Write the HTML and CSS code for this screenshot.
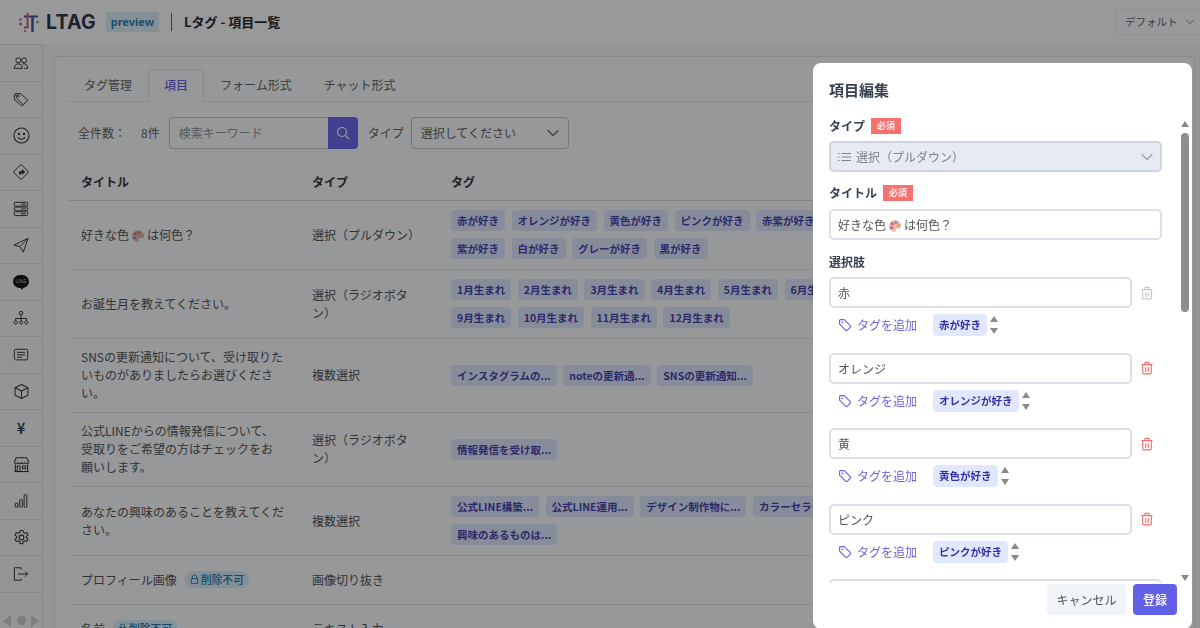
FILE: index.html
```html
<!DOCTYPE html>
<html lang="ja">
<head>
  <meta charset="UTF-8">
  <title>Lタグ - 項目一覧</title>
  <link rel="stylesheet" href="styles.css">
</head>
<body>
  <svg class="defs" width="0" height="0">
    <defs>
      <symbol id="palette" viewBox="0 0 16 16">
        <path d="M8 1.500C3.800 1.500 1 4.400 1 8s2.900 6.500 6.500 6.500c1.500 0 1.600-1 1.200-1.900-.4-1 .2-1.800 1.300-1.800h2c1.700 0 3-1 3-2.800 0-3.700-3.200-6.500-7-6.500z" fill="#e8b4a4"/>
        <circle cx="5" cy="5.500" r="1.500" fill="#d9505f"/>
        <circle cx="9" cy="4" r="1.500" fill="#6a7fd0"/>
        <circle cx="12" cy="7" r="1.400" fill="#e3a13c"/>
        <circle cx="4" cy="10" r="1.500" fill="#8a5fc0"/>
      </symbol>
      <symbol id="tag" viewBox="0 0 16 16">
        <path d="M1.800 2.800a1 1 0 0 1 1-1h4.300l7 7a1.200 1.200 0 0 1 0 1.700l-3.600 3.600a1.200 1.200 0 0 1-1.700 0l-7-7z" fill="none" stroke="currentColor" stroke-width="1.300" stroke-linejoin="round"/>
        <circle cx="5" cy="5" r="1" fill="currentColor"/>
      </symbol>
      <symbol id="trash" viewBox="0 0 14 16">
        <path d="M1 4h12M4.500 4V2.500a1 1 0 0 1 1-1h3a1 1 0 0 1 1 1V4M2 4v9.500a1.300 1.300 0 0 0 1.300 1.300h7.400a1.300 1.300 0 0 0 1.300-1.300V4M5.500 7.500v4.500M8.500 7.500v4.500" fill="none" stroke="currentColor" stroke-width="1.300" stroke-linecap="round"/>
      </symbol>
      <symbol id="chevron" viewBox="0 0 12 8">
        <path d="M1 1.500l5 5 5-5" fill="none" stroke="currentColor" stroke-width="1.200" stroke-linecap="round" stroke-linejoin="round"/>
      </symbol>
      <symbol id="lock" viewBox="0 0 10 12">
        <path d="M2.500 5V3.500a2.500 2.500 0 0 1 5 0V5M1.500 5h7v5.500h-7z" fill="none" stroke="currentColor" stroke-width="1"/>
      </symbol>
    </defs>
  </svg>

  <header class="topbar">
    <div class="logo">
      <svg class="logo-mark" width="20" height="20" viewBox="0 0 20 20">
        <path d="M5 4.500h14" stroke="#2f4a9e" stroke-width="2" fill="none"/>
        <path d="M8.500 1v14.500h-3.500" stroke="#d94a58" stroke-width="2" fill="none"/>
        <path d="M13.500 4.500V20" stroke="#2f4a9e" stroke-width="2.500" fill="none"/>
        <circle cx="1.500" cy="7.500" r="1.200" fill="#d94a58"/>
        <circle cx="1.500" cy="12" r="1.200" fill="#2f4a9e"/>
        <circle cx="18.500" cy="10" r="1.200" fill="#d94a58"/>
        <circle cx="6" cy="19" r="1.100" fill="#8a5fc0"/>
      </svg>
      <span class="logo-text">LTAG</span>
    </div>
    <span class="preview">preview</span>
    <span class="top-sep"></span>
    <span class="page-title">Lタグ - 項目一覧</span>
    <div class="account">デフォルト<svg width="8" height="6"><use href="#chevron"/></svg></div>
  </header>

  <div class="layout">
    <nav class="sidebar">
      <a class="nav-item"><svg viewBox="0 0 18 18"><circle cx="6" cy="6" r="2.800"/><circle cx="12.500" cy="6" r="2.800"/><path d="M1.500 15c0-3 1.800-5 4.500-5s4.500 2 4.500 5zM11 10c3.500-.5 5.500 1.500 5.500 5h-4"/></svg></a>
      <a class="nav-item"><svg viewBox="0 0 18 18"><path d="M3 3h6l7.500 7.500-5 5L4 8z"/><path d="M3 3L1 5l1 5 7.500 6.500 2-1"/><circle cx="6" cy="5.500" r="1"/></svg></a>
      <a class="nav-item"><svg class="large" viewBox="0 0 18 18"><circle cx="9" cy="9" r="8"/><circle cx="6.300" cy="7.300" r=".7" fill="currentColor"/><circle cx="11.700" cy="7.300" r=".7" fill="currentColor"/><path d="M5 11c2.200 2.700 5.800 2.700 8 0"/></svg></a>
      <a class="nav-item"><svg viewBox="0 0 18 18"><path d="M7.800 1.500a1.700 1.700 0 0 1 2.400 0l6.300 6.300a1.700 1.700 0 0 1 0 2.400l-6.300 6.300a1.700 1.700 0 0 1-2.400 0l-6.300-6.300a1.700 1.700 0 0 1 0-2.400z"/><path d="M7.500 11.500V8.500h3.300V6.500l2.200 2.500-2.200 2.300V9.800H8.800v1.700z" fill="currentColor"/></svg></a>
      <a class="nav-item"><svg viewBox="0 0 18 18"><rect x="1.500" y="1.500" width="15" height="4.300" rx="1"/><rect x="1.500" y="6.800" width="15" height="4.300" rx="1"/><rect x="1.500" y="12.100" width="15" height="4.300" rx="1"/><path d="M9 3.600h5.500M9 9h5.500M9 14.300h5.500"/></svg></a>
      <a class="nav-item"><svg viewBox="0 0 18 18"><path d="M17 1.500L1 9l6.800 1.800L11.500 17z"/><path d="M17 1.500L7.800 10.800"/></svg></a>
      <a class="nav-item"><span class="line-bubble">LINE</span></a>
      <a class="nav-item"><svg viewBox="0 0 18 18"><circle cx="9" cy="3.500" r="2"/><path d="M9 5.500V9M3 12V9.500h12V12M9 9v3"/><circle cx="3" cy="14" r="1.800"/><circle cx="9" cy="14" r="1.800"/><circle cx="15" cy="14" r="1.800"/></svg></a>
      <a class="nav-item"><svg viewBox="0 0 18 18"><rect x="1.500" y="2.500" width="15" height="12" rx="1.500"/><path d="M4.500 6h9M4.500 8.800h9M4.500 11.500h5.500"/></svg></a>
      <a class="nav-item"><svg class="large" viewBox="0 0 18 18"><path d="M9 1.500l6.800 3.500v8L9 16.500 2.200 13V5z"/><path d="M2.200 5L9 8.500 15.800 5M9 8.500v8"/></svg></a>
      <a class="nav-item yen">¥</a>
      <a class="nav-item"><svg class="large" viewBox="0 0 18 18"><path d="M2.500 9v7.500h13V9"/><path d="M3.500 1.800h11l2 4.200c0 2.700-3 2.700-3.800.8-.8 1.900-2.800 1.900-3.700 0-.9 1.900-2.900 1.900-3.700 0C4.500 8.700 1.500 8.700 1.500 6z"/><rect x="4.500" y="10.500" width="3" height="6"/><rect x="10" y="10.500" width="3.500" height="3"/><path d="M1.500 16.500h15"/></svg></a>
      <a class="nav-item"><svg viewBox="0 0 18 18"><rect x="2.500" y="11.500" width="3" height="4.500" rx=".7"/><rect x="7.500" y="7.500" width="3" height="8.500" rx=".7"/><rect x="12.500" y="2" width="3" height="14" rx=".7"/></svg></a>
      <a class="nav-item"><svg class="large" viewBox="0 0 18 18"><path d="M7.600 1.500h2.800l.5 2.200 1.500.8 2.100-.8 1.400 2.500-1.700 1.500v1.600l1.700 1.500-1.400 2.500-2.100-.8-1.500.8-.5 2.200H7.600l-.5-2.200-1.500-.8-2.100.8-1.400-2.500 1.700-1.500V7.700L2.100 6.200l1.400-2.500 2.100.8 1.500-.8z"/><circle cx="9" cy="9" r="2.500"/></svg></a>
      <a class="nav-item"><svg viewBox="0 0 18 18"><path d="M9 4V2H1.500v14H9v-2"/><path d="M5.500 9h11M13.500 6l3 3-3 3"/></svg></a>
      <div class="side-arrows"><span class="arr-left"></span><span class="arr-dot"></span><span class="arr-right"></span></div>
    </nav>

    <main class="card">
      <div class="tabs">
        <a class="tab">タグ管理</a>
        <a class="tab active">項目</a>
        <a class="tab">フォーム形式</a>
        <a class="tab">チャット形式</a>
      </div>

      <div class="toolbar">
        <span class="count-label">全件数：</span>
        <span class="count">8件</span>
        <div class="search">
          <span class="search-input">検索キーワード</span>
          <span class="search-btn"><svg width="14" height="14" viewBox="0 0 14 14"><circle cx="6" cy="6" r="4.500" fill="none" stroke="currentColor" stroke-width="1.200"/><path d="M9.500 9.500L13 13" stroke="currentColor" stroke-width="1.200"/></svg></span>
        </div>
        <span class="type-label">タイプ</span>
        <div class="type-select">選択してください<svg width="12" height="8"><use href="#chevron"/></svg></div>
      </div>

      <table class="items">
        <thead>
          <tr><th class="c-title">タイトル</th><th class="c-type">タイプ</th><th>タグ</th></tr>
        </thead>
        <tbody>
          <tr>
            <td>好きな色<svg class="emoji" width="14" height="14"><use href="#palette"/></svg>は何色？</td>
            <td>選択（プルダウン）</td>
            <td><div class="tags">
              <span class="tag">赤が好き</span><span class="tag">オレンジが好き</span><span class="tag">黄色が好き</span><span class="tag">ピンクが好き</span><span class="tag">赤紫が好き</span><span class="tag">青が好き</span><span class="tag">緑が好き</span>
              <span class="tag">紫が好き</span><span class="tag">白が好き</span><span class="tag">グレーが好き</span><span class="tag">黒が好き</span>
            </div></td>
          </tr>
          <tr>
            <td>お誕生月を教えてください。</td>
            <td>選択（ラジオボタ<br>ン）</td>
            <td><div class="tags">
              <span class="tag">1月生まれ</span><span class="tag">2月生まれ</span><span class="tag">3月生まれ</span><span class="tag">4月生まれ</span><span class="tag">5月生まれ</span><span class="tag">6月生まれ</span><span class="tag">7月生まれ</span><span class="tag">8月生まれ</span>
              <span class="tag">9月生まれ</span><span class="tag">10月生まれ</span><span class="tag">11月生まれ</span><span class="tag">12月生まれ</span>
            </div></td>
          </tr>
          <tr>
            <td>SNSの更新通知について、受け取りた<br>いものがありましたらお選びくださ<br>い。</td>
            <td>複数選択</td>
            <td><div class="tags"><span class="tag">インスタグラムの...</span><span class="tag">noteの更新通...</span><span class="tag">SNSの更新通知...</span></div></td>
          </tr>
          <tr>
            <td>公式LINEからの情報発信について、<br>受取りをご希望の方はチェックをお<br>願いします。</td>
            <td>選択（ラジオボタ<br>ン）</td>
            <td><div class="tags"><span class="tag">情報発信を受け取...</span></div></td>
          </tr>
          <tr>
            <td>あなたの興味のあることを教えてくだ<br>さい。</td>
            <td>複数選択</td>
            <td><div class="tags">
              <span class="tag">公式LINE構築...</span><span class="tag">公式LINE運用...</span><span class="tag">デザイン制作物に...</span><span class="tag">カラーセラピー...</span><span class="tag">パーソナルカラ...</span>
              <span class="tag">興味のあるものは...</span>
            </div></td>
          </tr>
          <tr class="short">
            <td>プロフィール画像<span class="locked"><svg width="9" height="11"><use href="#lock"/></svg>削除不可</span></td>
            <td>画像切り抜き</td>
            <td></td>
          </tr>
          <tr class="short">
            <td>名前<span class="locked"><svg width="9" height="11"><use href="#lock"/></svg>削除不可</span></td>
            <td>テキスト入力</td>
            <td></td>
          </tr>
        </tbody>
      </table>
    </main>
  </div>

  <div class="overlay"></div>

  <section class="modal">
    <h2 class="modal-title">項目編集</h2>
    <div class="modal-body">
      <div class="label-row"><label>タイプ</label><span class="required">必須</span></div>
      <div class="select-box">
        <svg width="13" height="10" viewBox="0 0 13 10"><path d="M3.500 1.500H13M3.500 5H13M3.500 8.500H13M0 1.500h1.500M0 5h1.500M0 8.500h1.500" stroke="currentColor" stroke-width="1.100" fill="none"/></svg>
        <span>選択（プルダウン）</span>
        <svg class="select-chev" width="12" height="8"><use href="#chevron"/></svg>
      </div>
      <div class="label-row second"><label>タイトル</label><span class="required">必須</span></div>
      <div class="text-box">好きな色<svg class="emoji" width="14" height="14"><use href="#palette"/></svg>は何色？</div>
      <div class="label-row third"><label>選択肢</label></div>

      <div class="option">
        <div class="option-top">
          <div class="text-box">赤</div>
          <svg class="trash off" width="12" height="14"><use href="#trash"/></svg>
        </div>
        <div class="option-tags">
          <a class="add-tag"><svg width="14" height="14"><use href="#tag"/></svg>タグを追加</a>
          <span class="tag light">赤が好き</span>
          <span class="sorter"><i class="up"></i><i class="down"></i></span>
        </div>
      </div>
      <div class="option">
        <div class="option-top">
          <div class="text-box">オレンジ</div>
          <svg class="trash" width="12" height="14"><use href="#trash"/></svg>
        </div>
        <div class="option-tags">
          <a class="add-tag"><svg width="14" height="14"><use href="#tag"/></svg>タグを追加</a>
          <span class="tag light">オレンジが好き</span>
          <span class="sorter"><i class="up"></i><i class="down"></i></span>
        </div>
      </div>
      <div class="option">
        <div class="option-top">
          <div class="text-box">黄</div>
          <svg class="trash" width="12" height="14"><use href="#trash"/></svg>
        </div>
        <div class="option-tags">
          <a class="add-tag"><svg width="14" height="14"><use href="#tag"/></svg>タグを追加</a>
          <span class="tag light">黄色が好き</span>
          <span class="sorter"><i class="up"></i><i class="down"></i></span>
        </div>
      </div>
      <div class="option">
        <div class="option-top">
          <div class="text-box">ピンク</div>
          <svg class="trash" width="12" height="14"><use href="#trash"/></svg>
        </div>
        <div class="option-tags">
          <a class="add-tag"><svg width="14" height="14"><use href="#tag"/></svg>タグを追加</a>
          <span class="tag light">ピンクが好き</span>
          <span class="sorter"><i class="up"></i><i class="down"></i></span>
        </div>
      </div>
      <div class="option">
        <div class="option-top">
          <div class="text-box"></div>
        </div>
      </div>
    </div>
    <div class="scrollbar"><i class="up"></i><span class="thumb"></span><i class="down"></i></div>
    <div class="modal-foot">
      <button class="btn cancel">キャンセル</button>
      <button class="btn submit">登録</button>
    </div>
  </section>
</body>
</html>
```

FILE: styles.css
```css
* {
  box-sizing: border-box;
}
html, body {
  height: 100%;
}
body {
  margin: 0;
  overflow: hidden;
  background: #f7f7f7;
  color: #333;
  font-family: "Noto Sans CJK JP", "Noto Sans", sans-serif;
  font-size: 12px;
  line-height: 18px;
}
.defs {
  display: block;
}

/* top bar */
.topbar {
  display: flex;
  align-items: center;
  height: 44px;
  padding-left: 19px;
  background: #fff;
}
.logo {
  display: flex;
  align-items: center;
  gap: 7px;
}
.logo-text {
  font-family: Inter, "Noto Sans", sans-serif;
  font-size: 19.500px;
  font-weight: 700;
  letter-spacing: .2px;
  color: #1c2333;
}
.preview {
  margin-left: 10px;
  padding: 1px 5px;
  background: #dcecf5;
  color: #1778a8;
  font-family: "Noto Sans", sans-serif;
  font-size: 11px;
  font-weight: 700;
  line-height: 18px;
}
.top-sep {
  width: 1px;
  height: 18px;
  margin: 0 12px;
  background: #555;
}
.page-title {
  font-size: 13px;
  font-weight: 700;
  color: #111;
}
.account {
  display: flex;
  align-items: center;
  gap: 8px;
  height: 26px;
  width: 84px;
  margin-left: auto;
  padding-left: 8px;
  border: 1px solid #eeeff1;
  border-right: 0;
  color: #555;
  font-size: 10.500px;
  white-space: nowrap;
}

/* sidebar and page */
.layout {
  display: flex;
  height: 584px;
}
.sidebar {
  display: flex;
  flex-direction: column;
  width: 43px;
  flex-shrink: 0;
  border-top: 1px solid #d8dadd;
  border-right: 1px solid #d8dadd;
}
.nav-item {
  display: flex;
  align-items: center;
  justify-content: center;
  flex: 0 0 36.500px;
  border-bottom: 1px solid #dfe1e4;
  color: #222;
}
.nav-item svg {
  width: 16px;
  height: 16px;
  fill: none;
  stroke: currentColor;
  stroke-width: 1.100;
  stroke-linejoin: round;
}
.nav-item svg.large {
  width: 17px;
  height: 17px;
}
.yen {
  font-size: 15px;
  font-weight: 500;
}
.line-bubble {
  display: block;
  position: relative;
  width: 16px;
  height: 13px;
  border-radius: 7px;
  background: #000;
  color: #aaa;
  font-family: "Liberation Sans", sans-serif;
  font-size: 5px;
  line-height: 13px;
  text-align: center;
}
.line-bubble::after {
  content: "";
  position: absolute;
  left: 7px;
  top: 12px;
  border-top: 3px solid #000;
  border-left: 2px solid transparent;
  border-right: 2px solid transparent;
}
.side-arrows {
  display: flex;
  align-items: center;
  justify-content: space-between;
  margin-top: 22px;
  padding: 0 3px 0 3px;
}
.arr-left {
  border: 6px solid transparent;
  border-left: 0;
  border-right: 8px solid #c9ccd0;
}
.arr-right {
  border: 6px solid transparent;
  border-right: 0;
  border-left: 8px solid #c9ccd0;
}
.arr-dot {
  width: 9px;
  height: 9px;
  border-radius: 50%;
  background: #c9ccd0;
}
.card {
  flex: 1;
  margin: 12px 9px 0 11px;
  padding: 12px 14px 0;
  height: 640px;
  background: #fdfdfc;
  border: 1px solid #dfe1e4;
  border-radius: 4px;
}
.tabs {
  display: flex;
  height: 33px;
  margin-left: -1px;
  border-bottom: 1px solid #dfe1e4;
}
.tab {
  display: block;
  height: 33px;
  padding: 6px 15px 0;
  border: 1px solid transparent;
  border-bottom: 0;
  color: #555;
}
.tab.active {
  background: #fdfdfc;
  border-color: #dfe1e4;
  color: #5a55d8;
  font-weight: 500;
}
.toolbar {
  display: flex;
  align-items: center;
  margin-top: 14px;
  padding-left: 9px;
  height: 33px;
  color: #555;
}
.count {
  margin-left: 15px;
}
.search {
  display: flex;
  margin-left: 9px;
  width: 189px;
  height: 32px;
}
.search-input {
  flex: 1;
  padding: 6px 9px;
  border: 1px solid #bcbfc5;
  border-right: 0;
  border-radius: 4px 0 0 4px;
  color: #888;
}
.search-btn {
  display: flex;
  align-items: center;
  justify-content: center;
  width: 30px;
  background: #5f5ae8;
  border-radius: 0 4px 4px 0;
  color: #fff;
}
.type-label {
  margin-left: 10px;
}
.type-select {
  display: flex;
  align-items: center;
  justify-content: space-between;
  width: 158px;
  height: 32px;
  margin-left: 7px;
  padding: 0 9px;
  border: 1px solid #bcbfc5;
  border-radius: 4px;
}

/* table */
.items {
  width: 1111px;
  margin-top: 15px;
  border-collapse: collapse;
  table-layout: fixed;
}
.items th {
  height: 36px;
  padding: 0 12px;
  border-bottom: 1px solid #d4d6d9;
  text-align: left;
  font-size: 12px;
  font-weight: 700;
  color: #222;
}
.items td {
  padding: 9.500px 12px;
  border-bottom: 1px solid #dfe1e4;
  color: #444;
  vertical-align: middle;
}
.c-title {
  width: 231px;
}
.c-type {
  width: 139px;
}
.short td {
  height: 49px;
  padding-top: 0;
  padding-bottom: 0;
}
.tags {
  display: flex;
  flex-wrap: wrap;
  gap: 7px 6.500px;
  width: 540px;
}
.tag {
  display: inline-block;
  height: 21px;
  padding: 0 6px;
  border-radius: 4px;
  background: #e0e7ff;
  color: #3730a3;
  font-size: 10.500px;
  font-weight: 700;
  line-height: 21px;
  white-space: nowrap;
}
.emoji {
  vertical-align: -3px;
  margin: 0 2px;
}
.locked {
  display: inline-flex;
  align-items: center;
  gap: 2px;
  margin-left: 8px;
  padding: 0 5px;
  height: 17px;
  border-radius: 8px;
  background: #d8eef8;
  color: #0c6d99;
  font-size: 10.800px;
  font-weight: 500;
}

/* dim layer */
.overlay {
  position: fixed;
  inset: 0;
  background: rgba(30, 33, 38, .46);
}

/* modal */
.modal {
  position: fixed;
  top: 63px;
  left: 813px;
  width: 379px;
  height: 566px;
  background: #fff;
  border-radius: 8px;
}
.modal-title {
  margin: 17px 0 0 16px;
  font-size: 15px;
  line-height: 20px;
  font-weight: 700;
  color: #374151;
}
.modal-body {
  height: 465px;
  margin-top: 18px;
  padding: 0 30px 0 16px;
  overflow: hidden;
}
.label-row {
  display: flex;
  align-items: center;
  gap: 6px;
  height: 16px;
  margin-bottom: 7px;
  margin-top: 0;
}
.label-row label {
  font-weight: 700;
  color: #374151;
}
.label-row.second {
  margin-top: 13px;
  margin-bottom: 8px;
}
.label-row.third {
  margin-top: 14px;
  margin-bottom: 7px;
}
.required {
  width: 30px;
  height: 16px;
  background: #f87171;
  color: #fde8e8;
  font-size: 9px;
  font-weight: 700;
  line-height: 16px;
  text-align: center;
}
.select-box {
  display: flex;
  align-items: center;
  gap: 5px;
  height: 31px;
  padding: 0 0 0 7px;
  background: #e5eaf3;
  border: 2px solid #ced3df;
  border-radius: 5px;
  color: #7d838d;
}
.select-chev {
  margin-left: auto;
  margin-right: 7px;
  color: #9a9fa8;
}
.text-box {
  flex: 1;
  height: 31px;
  padding: 5px 7px;
  border: 2px solid #dcdfe8;
  border-radius: 5px;
  color: #555;
}
.option {
  margin-bottom: 16.500px;
}
.option-top {
  display: flex;
  align-items: center;
}
.trash {
  margin: 0 9px;
  flex-shrink: 0;
  color: #ef6f6f;
}
.trash.off {
  color: #c4c8cf;
}
.option-tags {
  display: flex;
  align-items: center;
  height: 22px;
  margin-top: 6px;
}
.add-tag {
  display: flex;
  align-items: center;
  gap: 5px;
  width: 104px;
  padding-left: 9px;
  color: #6a64e0;
}
.tag.light {
  height: 22px;
  line-height: 22px;
}
.sorter {
  display: flex;
  flex-direction: column;
  gap: 6px;
  margin-left: 3px;
}
.up, .down {
  display: block;
  width: 0;
  height: 0;
  border-left: 4.500px solid transparent;
  border-right: 4.500px solid transparent;
}
.up {
  border-bottom: 6px solid #8a8a8a;
}
.down {
  border-top: 6px solid #8a8a8a;
}
.scrollbar {
  position: absolute;
  top: 58px;
  right: 3px;
  height: 460px;
  display: flex;
  flex-direction: column;
  align-items: center;
  width: 8px;
}
.thumb {
  width: 8px;
  height: 179px;
  margin-top: 6px;
  flex-shrink: 0;
  border-radius: 4px;
  background: #8e8e8e;
}
.scrollbar .down {
  margin-top: auto;
}
.modal-foot {
  display: flex;
  justify-content: flex-end;
  gap: 7px;
  padding: 1px 15px 0 0;
}
.btn {
  height: 31px;
  padding: 0;
  border: 0;
  border-radius: 4px;
  font-family: inherit;
  font-size: 12px;
}
.cancel {
  width: 79px;
  background: #f1f4f8;
  color: #555;
}
.submit {
  width: 44px;
  background: #6360e8;
  color: #fff;
  font-weight: 500;
}
```
